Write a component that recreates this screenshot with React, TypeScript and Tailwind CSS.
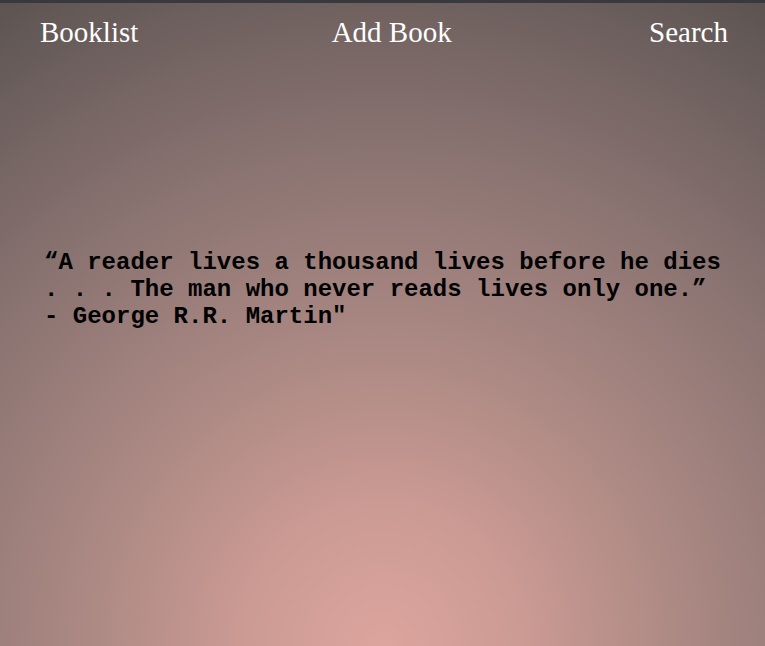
import React from "react";

export default function App() {
  return (
    <div className="w-[765px] h-[646px] flex flex-col overflow-hidden bg-[#38393d]">
      <div className="h-[3px] bg-[#38393d]" />
      <div className="flex-1 flex flex-col bg-[radial-gradient(circle_farthest-corner_at_50%_100%,#dca59e_0%,#cc9b94_18%,#a98782_42%,#887270_68%,#5c5452_100%)]">
        <nav className="flex justify-between items-center h-[62px] pl-[40px] pr-[37px] text-white text-[29px] font-['Liberation_Serif',serif] pb-[2px]">
          <span>Booklist</span>
          <span className="mr-[4px]">Add Book</span>
          <span>Search</span>
        </nav>
        <div className="pt-[184px] pl-[44px] font-['Liberation_Mono',monospace] font-bold text-[24px] leading-[27px] text-black whitespace-pre">
          {"“A reader lives a thousand lives before he dies\n. . . The man who never reads lives only one.”\n- George R.R. Martin\""}
        </div>
      </div>
    </div>
  );
}
